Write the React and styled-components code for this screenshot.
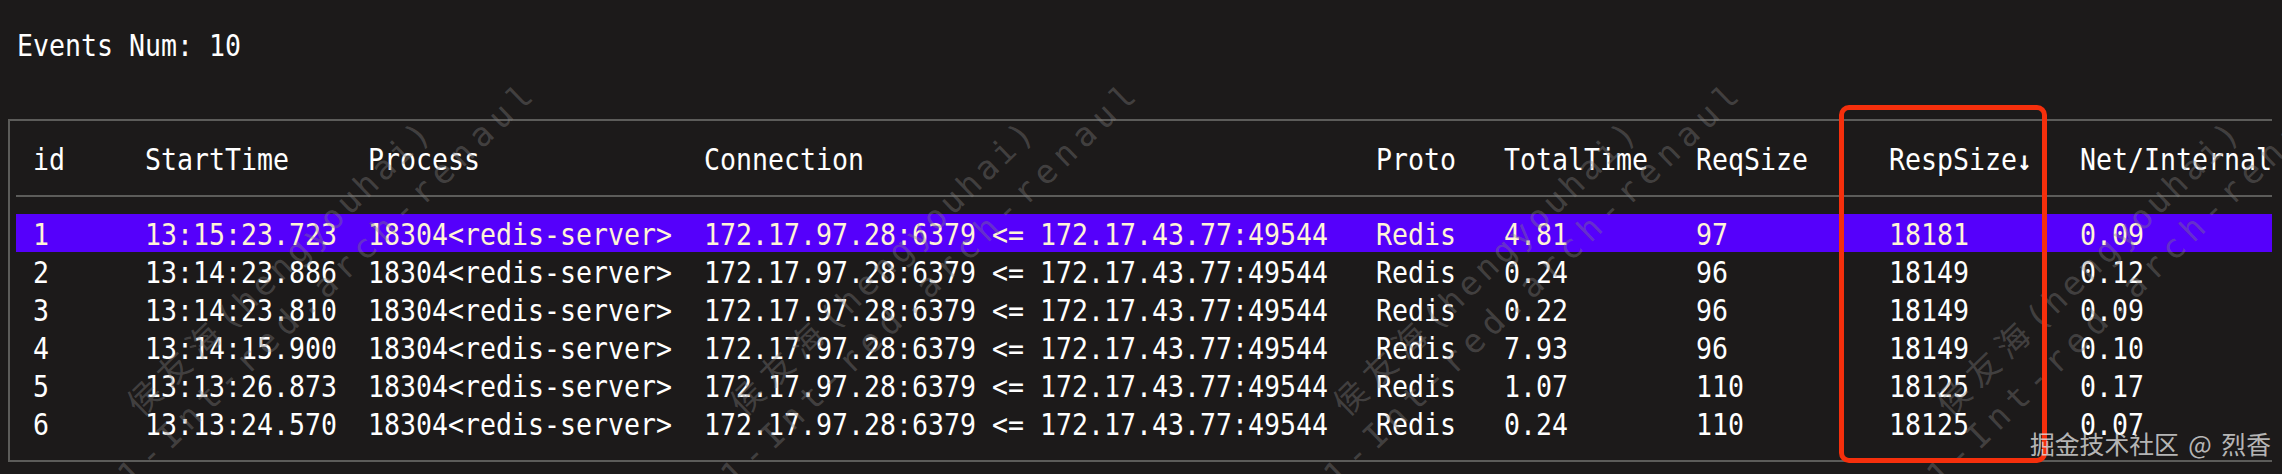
import React from "react";
import styled, { createGlobalStyle } from "styled-components";

const GlobalStyle = createGlobalStyle`
  html, body {
    margin: 0;
    padding: 0;
    background: #1c1a1a;
  }
`;

const columns = "112px 223px 336px 672px 128px 192px 193px 191px 1fr";

const Page = styled.div`
  position: relative;
  width: 2282px;
  height: 474px;
  overflow: hidden;
  background: #1c1a1a;
  color: #fff;
  font-family: "DejaVu Sans Mono", "Liberation Mono", monospace;
  font-size: 26.58px;
`;

// the terminal font in the shot is a bit taller than DejaVu at this width
const Cell = styled.span`
  display: inline-block;
  justify-self: start;
  transform: translateY(2px) scaleY(1.12);
`;

const Title = styled.div`
  height: 119px;
  box-sizing: border-box;
  padding: 27px 0 0 17px;
  line-height: 34px;
`;

const Panel = styled.div`
  margin-left: 8px;
  width: 2264px;
  height: 343px;
  box-sizing: border-box;
  border: 2px solid #5c5c5a;
  border-right: none;
  padding-left: 6px;
`;

const Row = styled.div`
  display: grid;
  grid-template-columns: ${columns};
  height: 38px;
  line-height: 38px;
  padding-left: 17px;
  white-space: pre;
  background: ${(p) => (p.$active ? "#5500fb" : "transparent")};
  color: ${(p) => (p.$active ? "#fff4d6" : "#fff")};
`;

const HeaderRow = styled(Row)`
  height: 76px;
  line-height: 74px;
  border-bottom: 2px solid #5c5c5a;
  margin-bottom: 17px;
  box-sizing: border-box;
`;

const Arrow = styled.span`
  font-size: 24px;
  font-weight: bold;
`;

const RedBox = styled.div`
  position: absolute;
  left: 1839px;
  top: 105px;
  width: 208px;
  height: 358px;
  box-sizing: border-box;
  border: 5px solid #f52f0c;
  border-radius: 10px;
`;

const Watermark = styled.div`
  position: absolute;
  left: ${(p) => 118 + p.$index * 603}px;
  top: 394px;
  transform-origin: 0 0;
  transform: rotate(-44deg);
  font-family: "DejaVu Sans Mono", "Noto Sans CJK SC", monospace;
  font-size: 33px;
  line-height: 44px;
  white-space: nowrap;
  color: rgba(128, 126, 126, 0.4);
  pointer-events: none;
`;

const NameLine = styled.div`
  letter-spacing: 4px;
`;

const NameCjk = styled.span`
  letter-spacing: 8px;
`;

const SecondLine = styled.div`
  margin-left: -56px;
  letter-spacing: 7.2px;
`;

const SiteMark = styled.div`
  position: absolute;
  left: 2030px;
  top: 426px;
  font-family: "Noto Sans CJK SC", "Noto Sans", sans-serif;
  font-size: 24.8px;
  line-height: 34px;
  word-spacing: 4px;
  color: rgba(225, 225, 225, 0.8);
  white-space: pre;
`;

const events = [
  ["1", "13:15:23.723", "4.81", "97", "18181", "0.09"],
  ["2", "13:14:23.886", "0.24", "96", "18149", "0.12"],
  ["3", "13:14:23.810", "0.22", "96", "18149", "0.09"],
  ["4", "13:14:15.900", "7.93", "96", "18149", "0.10"],
  ["5", "13:13:26.873", "1.07", "110", "18125", "0.17"],
  ["6", "13:13:24.570", "0.24", "110", "18125", "0.07"],
];

export default function App() {
  return (
    <Page>
      <GlobalStyle />
      <Title>
        <Cell>Events Num: 10</Cell>
      </Title>
      <Panel>
        <HeaderRow>
          <Cell>id</Cell>
          <Cell>StartTime</Cell>
          <Cell>Process</Cell>
          <Cell>Connection</Cell>
          <Cell>Proto</Cell>
          <Cell>TotalTime</Cell>
          <Cell>ReqSize</Cell>
          <Cell>
            RespSize<Arrow>↓</Arrow>
          </Cell>
          <Cell>Net/Internal</Cell>
        </HeaderRow>
        {events.map(([id, start, total, req, resp, net], i) => (
          <Row key={id} $active={i === 0}>
            <Cell>{id}</Cell>
            <Cell>{start}</Cell>
            <Cell>18304&lt;redis-server&gt;</Cell>
            <Cell>172.17.97.28:6379 &lt;= 172.17.43.77:49544</Cell>
            <Cell>Redis</Cell>
            <Cell>{total}</Cell>
            <Cell>{req}</Cell>
            <Cell>{resp}</Cell>
            <Cell>{net}</Cell>
          </Row>
        ))}
      </Panel>
      {[0, 1, 2, 3].map((n) => (
        <Watermark key={n} $index={n}>
          <NameLine>
            <NameCjk>侯友海</NameCjk>(hengyouhai)
          </NameLine>
          <SecondLine>1-Int-red.arch-renaul</SecondLine>
        </Watermark>
      ))}
      <RedBox />
      <SiteMark>掘金技术社区 @ 烈香</SiteMark>
    </Page>
  );
}
